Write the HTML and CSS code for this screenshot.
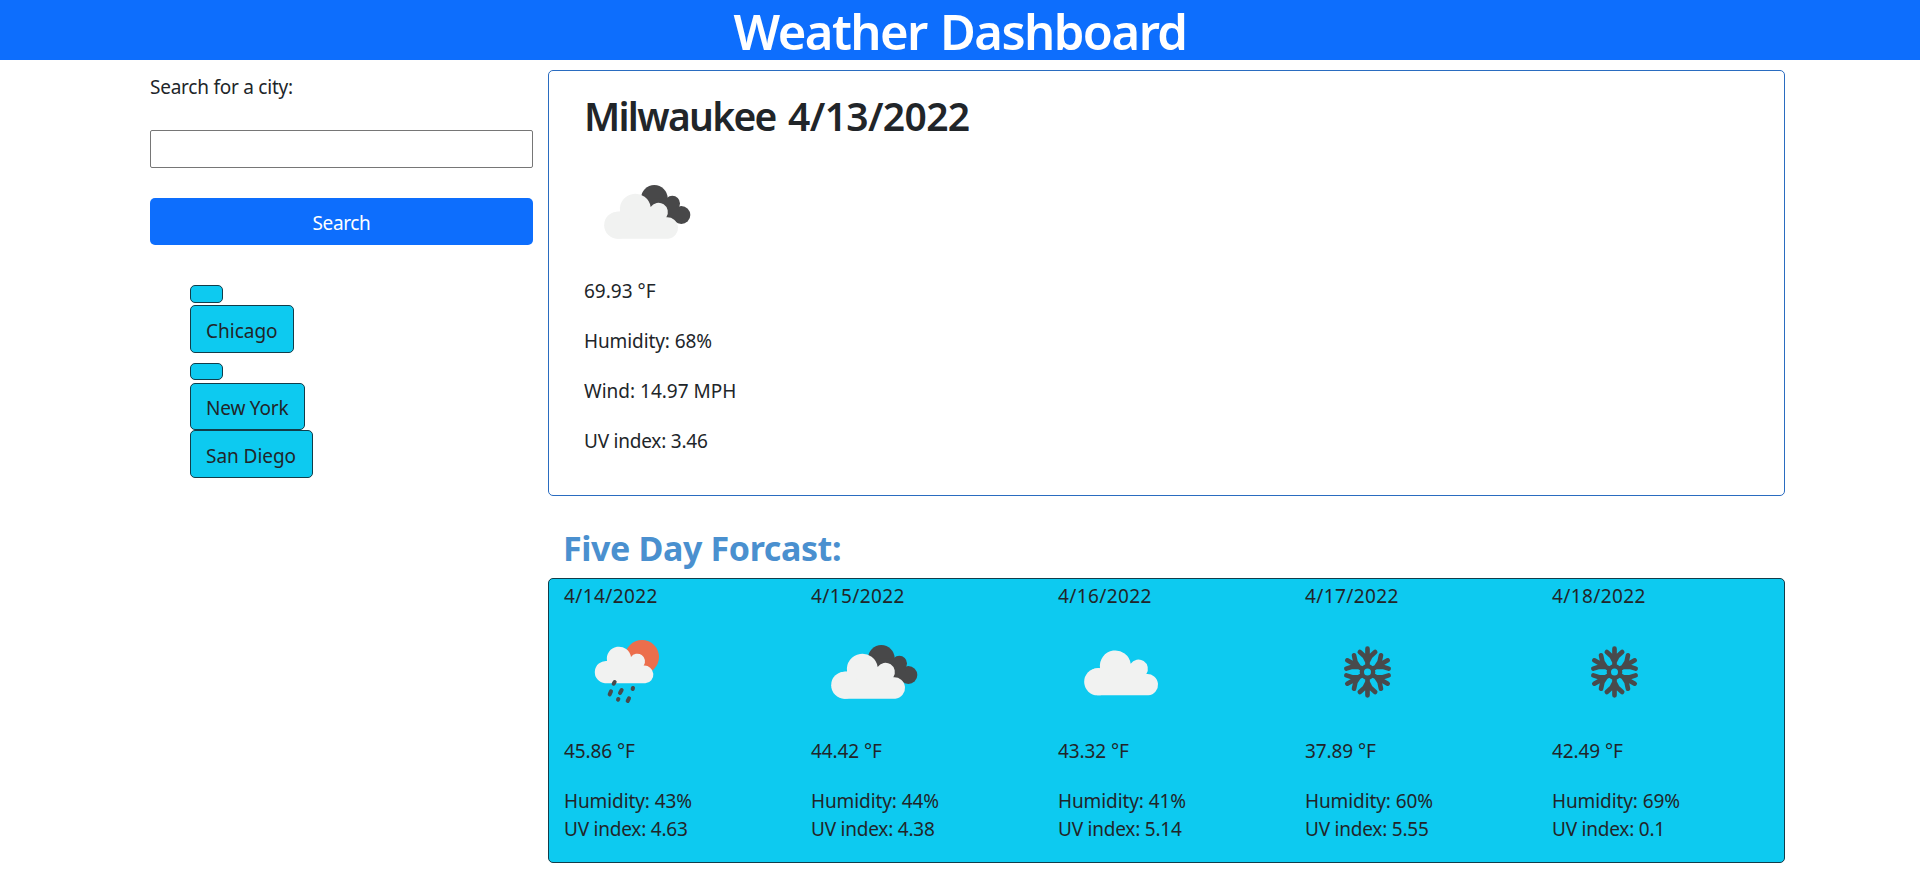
FILE: index.html
```html
<!DOCTYPE html>
<html lang="en">
<head>
<meta charset="utf-8">
<title>Weather Dashboard</title>
<link rel="stylesheet" href="styles.css">
</head>
<body>
<svg class="defs" aria-hidden="true">
  <defs>
    <g id="cloud">
      <path d="M193 386A40.500 40.500 0 0 1 200 304.500A46 46 0 1 1 292 291A28 28 0 0 1 339 322A32 32 0 0 1 345 386Z" fill="#f1f2f1"/>
      <circle cx="193" cy="345.500" r="40.500" fill="#f1f2f1"/>
    </g>
    <g id="arm">
      <path d="M0-13V-70M-23-60L0-39L23-60M-8-46L0-30L8-46" fill="none" stroke="#484a4c" stroke-width="14" stroke-linecap="round" stroke-linejoin="round"/>
    </g>
    <symbol id="broken-clouds" viewBox="92 126 360 360">
      <g fill="#484849"><circle cx="303" cy="265" r="40"/><circle cx="357" cy="280" r="23"/><circle cx="384" cy="315" r="27"/><path d="M300 265L358 265L390 330L345 345L290 300Z"/></g>
      <use href="#cloud"/>
    </symbol>
    <symbol id="clouds" viewBox="74 136 360 360"><use href="#cloud"/></symbol>
    <symbol id="rain" viewBox="72 306 360 360">
      <circle cx="306" cy="441" r="51" fill="#ec6e4c"/>
      <path d="M195 520A33.500 33.500 0 1 1 201 453A36.500 36.500 0 1 1 273 441A23 23 0 0 1 311 467A26.500 26.500 0 0 1 316 520Z" fill="#f1f2f1"/>
      <path d="M224 516L221 521M213 544L209 553M245 540L240 549M279 534L278 537M235 567L234 569M267 565L263 573" fill="none" stroke="#484a4c" stroke-width="12" stroke-linecap="round"/>
    </symbol>
    <symbol id="snow" viewBox="75 126 360 360">
      <g transform="translate(262.500 306)">
        <use href="#arm"/><use href="#arm" transform="rotate(60)"/><use href="#arm" transform="rotate(120)"/><use href="#arm" transform="rotate(180)"/><use href="#arm" transform="rotate(240)"/><use href="#arm" transform="rotate(300)"/>
        <circle r="17" fill="#0dcaf0" stroke="#484a4c" stroke-width="13"/>
      </g>
    </symbol>
  </defs>
</svg>
<header class="banner"><h1>Weather Dashboard</h1></header>
<div class="layout">
  <aside class="sidebar">
    <label class="search-label" for="city">Search for a city:</label>
    <input class="search-input" id="city" type="text">
    <button class="search-button">Search</button>
    <div class="history">
      <button class="city empty" aria-label="Empty search"></button>
      <button class="city chicago">Chicago</button>
      <button class="city empty second" aria-label="Empty search"></button>
      <button class="city new-york">New York</button>
      <button class="city san-diego">San Diego</button>
    </div>
  </aside>
  <main class="content">
    <section class="current">
      <h2>Milwaukee <span class="today">4/13/2022</span></h2>
      <svg class="icon"><use href="#broken-clouds"/></svg>
      <p>69.93 °F</p>
      <p class="humidity">Humidity: 68%</p>
      <p>Wind: 14.97 MPH</p>
      <p class="uv">UV index: 3.46</p>
    </section>
    <h3>Five Day Forcast:</h3>
    <section class="forecast">
      <div class="day"><div class="date">4/14/2022</div><svg class="icon"><use href="#rain"/></svg><div class="temp">45.86 °F</div><div class="humidity">Humidity: 43%</div><div class="uv">UV index: 4.63</div></div>
      <div class="day"><div class="date">4/15/2022</div><svg class="icon"><use href="#broken-clouds"/></svg><div class="temp">44.42 °F</div><div class="humidity">Humidity: 44%</div><div class="uv">UV index: 4.38</div></div>
      <div class="day"><div class="date">4/16/2022</div><svg class="icon"><use href="#clouds"/></svg><div class="temp">43.32 °F</div><div class="humidity">Humidity: 41%</div><div class="uv">UV index: 5.14</div></div>
      <div class="day"><div class="date">4/17/2022</div><svg class="icon"><use href="#snow"/></svg><div class="temp">37.89 °F</div><div class="humidity">Humidity: 60%</div><div class="uv">UV index: 5.55</div></div>
      <div class="day"><div class="date">4/18/2022</div><svg class="icon"><use href="#snow"/></svg><div class="temp">42.49 °F</div><div class="humidity">Humidity: 69%</div><div class="uv">UV index: 0.1</div></div>
    </section>
  </main>
</div>
</body>
</html>
```
FILE: styles.css
```css
* { box-sizing: border-box; }
body {
  margin: 0;
  background: #fff;
  color: #212529;
  font: 19px/28px "Noto Sans", "Open Sans", sans-serif;
}
h1, h2, h3, p { margin: 0; }
button { font: inherit; }
.defs { display: block; width: 0; height: 0; }
.banner { height: 60px; padding-top: 2px; background: #0d6efd; color: #fff; text-align: center; }
.banner h1 { font-size: 49px; line-height: 58px; font-weight: 600; letter-spacing: -1.55px; word-spacing: 2px; }

.layout { display: flex; gap: 15px; padding: 10px 135px 0 150px; }
.sidebar { width: 383px; flex: none; display: flex; flex-direction: column; }
.search-label { margin-top: 3px; letter-spacing: -0.24px; }
.search-input { height: 38px; margin-top: 29px; border: 1px solid #767676; border-radius: 2px; }
.search-button {
  height: 47px;
  margin-top: 30px;
  padding: 3px 0 0;
  border: 0;
  border-radius: 5px;
  background: #0d6efd;
  color: #fff;
  letter-spacing: -0.35px;
}
.history { display: flex; flex-direction: column; align-items: flex-start; padding: 40px 0 0 40px; }
.city {
  height: 48px;
  padding: 3px 0 0 15px;
  border: 1px solid #123d4a;
  border-radius: 5px;
  background: #0dcaf0;
  color: #212529;
  text-align: left;
}
.city.empty { width: 33px; height: 18px; margin-bottom: 2px; padding: 0; }
.city.second { height: 17px; margin: 10px 0 3px; }
.chicago { width: 104px; }
.new-york { width: 115px; height: 47px; padding-top: 2px; letter-spacing: -0.2px; }
.san-diego { width: 123px; letter-spacing: -0.05px; }

.content { width: 1237px; flex: none; }
.current { height: 426px; padding: 20px 35px 0; border: 1px solid #2a6cc0; border-radius: 5px; }
.current h2 { font-size: 39px; line-height: 49px; font-weight: 600; letter-spacing: -1.7px; word-spacing: 4px; }
.today { letter-spacing: -0.65px; }
.icon { display: block; width: 120px; height: 120px; }
.current .icon { margin: 12px 0 5px; }
.current p { margin-bottom: 22px; }
.uv { letter-spacing: -0.22px; }
h3 {
  margin: 32px 0 10px 15px;
  color: #4a90cf;
  font-size: 34px;
  line-height: 40px;
  font-weight: 700;
  letter-spacing: -0.38px;
}
.forecast {
  display: grid;
  grid-template-columns: repeat(5, 247px);
  height: 285px;
  padding: 3px 0 0 15px;
  border: 1px solid #123d4a;
  border-radius: 5px;
  background: #0dcaf0;
}
.date { letter-spacing: 0.4px; }
.humidity { letter-spacing: -0.1px; }
.day .icon { margin: 2px 0 5px; }
.temp { margin-bottom: 22px; letter-spacing: -0.1px; }
```
